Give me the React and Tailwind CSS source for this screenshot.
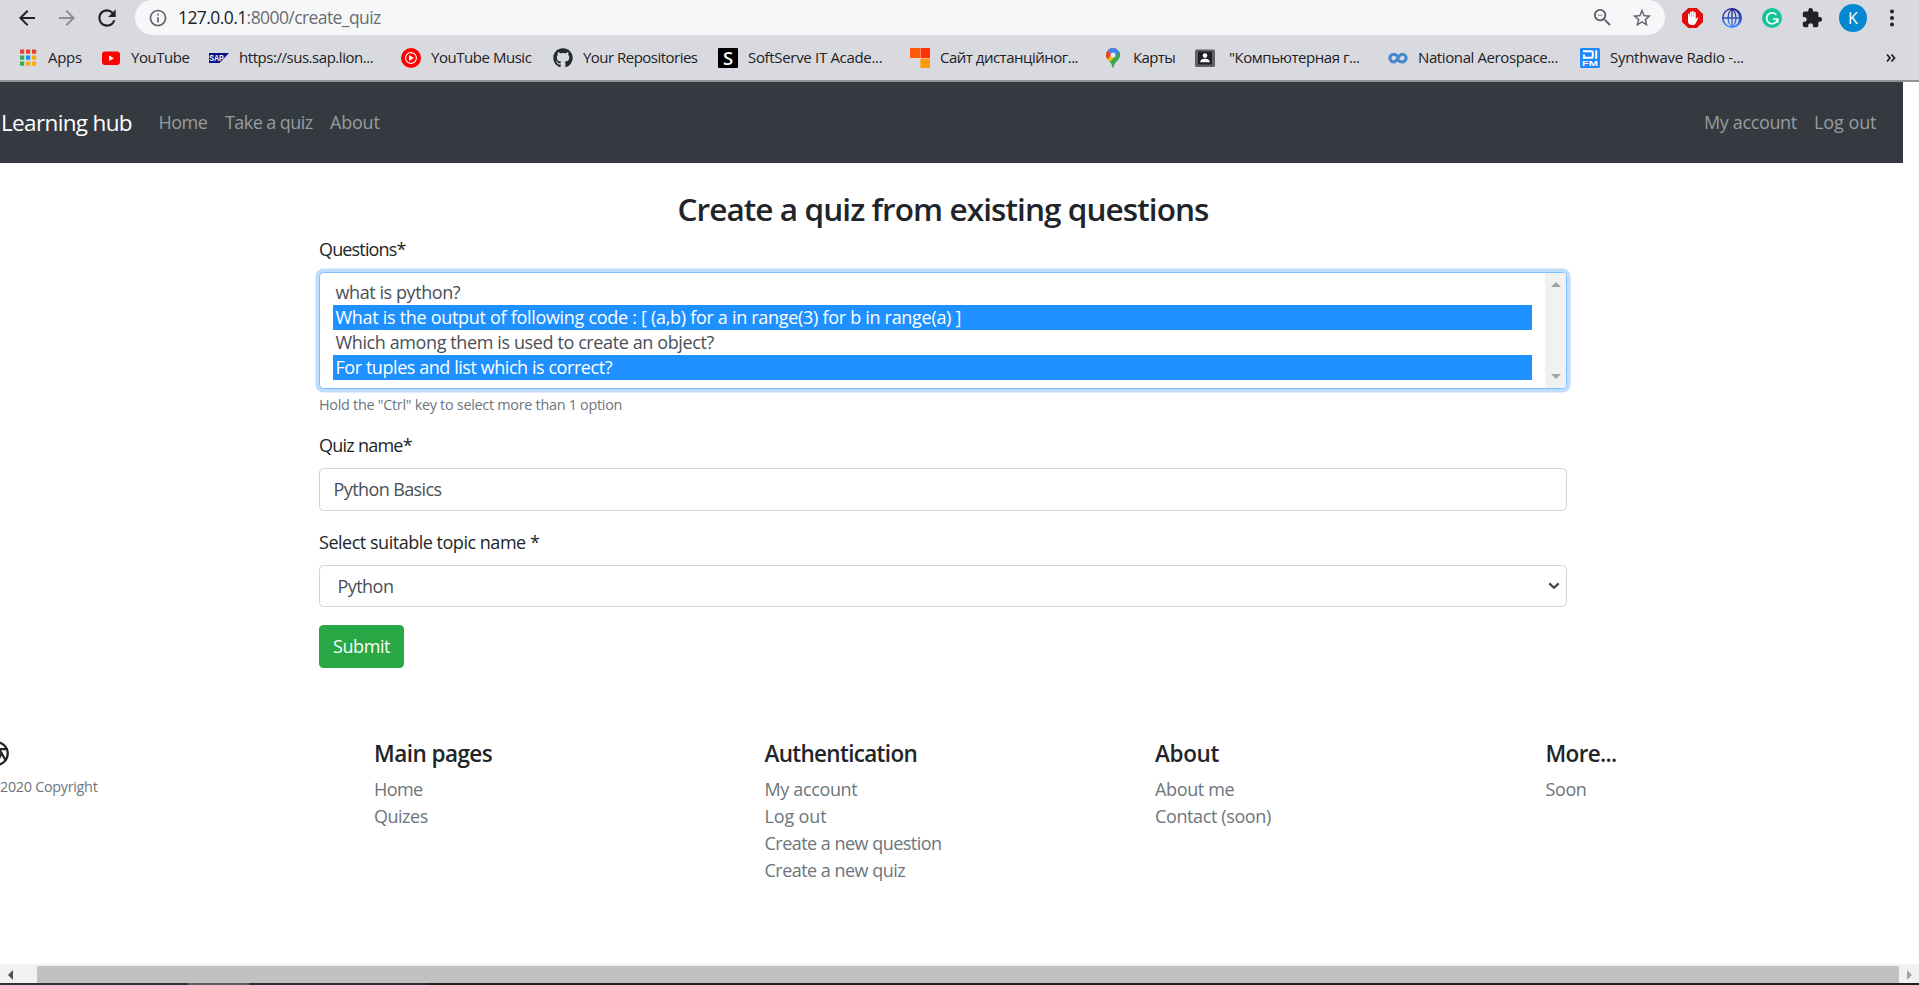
import React from "react";
import { FaGithub } from "react-icons/fa";
import { MdExtension, MdZoomOut, MdStarBorder, MdInfoOutline, MdRefresh, MdArrowBack, MdArrowForward } from "react-icons/md";
import { Aperture } from "lucide-react";

function AppsIcon() {
  const c = ["#ea4335", "#ea4335", "#ea4335", "#34a853", "#1a8cff", "#fbac08", "#34a853", "#fbac08", "#fbac08"];
  return (
    <svg width="20" height="20" viewBox="0 0 20 20">
      {c.map((f, i) => (
        <rect key={i} x={2 + (i % 3) * 6} y={1.5 + Math.floor(i / 3) * 6} width="4.2" height="4.2" fill={f} />
      ))}
    </svg>
  );
}

function YouTubeIcon() {
  return (
    <svg width="20" height="20" viewBox="0 0 20 20">
      <rect x="1" y="3.5" width="18" height="13.5" rx="3" fill="#f00" />
      <path d="M8.2 7.5v5.4l4.8-2.7z" fill="#fff" />
    </svg>
  );
}

function SapIcon() {
  return (
    <svg width="20" height="20" viewBox="0 0 20 20">
      <path d="M0 5h20l-9.5 10H0z" fill="#0a0f8a" />
      <text x="0.3" y="13" fontSize="8.4" fontWeight="800" fill="#fff" fontFamily="Liberation Sans, sans-serif" textLength="14.5" lengthAdjust="spacingAndGlyphs">SAP</text>
    </svg>
  );
}

function MusicIcon() {
  return (
    <svg width="20" height="20" viewBox="0 0 20 20">
      <circle cx="10" cy="10" r="10" fill="#f00" />
      <circle cx="10" cy="10" r="5.4" fill="none" stroke="#fff" strokeWidth="1.1" />
      <path d="M8 6.9v6.2l5-3.1z" fill="#fff" />
    </svg>
  );
}

function SoftServeIcon() {
  return (
    <svg width="20" height="20" viewBox="0 0 20 20">
      <rect width="20" height="20" rx="1" fill="#000" />
      <text x="10" y="16.6" fontSize="18.5" fontWeight="600" fill="#fff" textAnchor="middle" fontFamily="Open Sans, sans-serif">S</text>
    </svg>
  );
}

function BlocksIcon() {
  return (
    <svg width="20" height="20" viewBox="0 0 20 20">
      <rect width="10" height="10" fill="#ff5a0a" />
      <rect x="10.4" width="9.6" height="10" fill="#ff3005" />
      <rect x="10.4" y="10.6" width="9.6" height="9.4" fill="#ff9a0a" />
      <rect x="10" width="0.6" height="10" fill="#ff9a6a" />
    </svg>
  );
}

function MapsIcon() {
  return (
    <svg width="20" height="20" viewBox="0 0 20 20">
      <defs>
        <clipPath id="pin">
          <path d="M10 0a6.9 6.9 0 0 0-6.9 6.9c0 2.2 1 3.7 2.4 5.4C7.500 14.600 9 16.500 9.400 19.300c.2.9 1 .9 1.200 0 .4-2.800 1.900-4.700 3.900-7 1.400-1.700 2.400-3.200 2.400-5.400A6.900 6.900 0 0 0 10 0z" />
        </clipPath>
      </defs>
      <g clipPath="url(#pin)">
        <rect width="20" height="20" fill="#34a853" />
        <path d="M0 0h20L3 18H0z" fill="#fbbc04" />
        <path d="M0 0h14L5 11 0 9z" fill="#ea4335" />
        <path d="M4 0h16v4l-6 7-4-4-5-4z" fill="#4285f4" />
        <path d="M12 9l5-6 2 6-5 6z" fill="#34a853" />
        <path d="M3 2.500l4.600 4L3 12z" fill="#ea4335" />
      </g>
      <circle cx="10" cy="6.900" r="2.500" fill="#e6eaf0" />
    </svg>
  );
}

function PersonIcon() {
  return (
    <svg width="20" height="20" viewBox="0 0 20 20">
      <rect y="1.500" width="20" height="17.500" rx="1.500" fill="#5f6368" />
      <rect x="3" y="3.500" width="14" height="13" fill="#202124" />
      <circle cx="10" cy="7.600" r="2.300" fill="#fff" />
      <path d="M5.400 14.200v-1c0-1.700 3-2.500 4.600-2.500s4.600.8 4.600 2.500v1z" fill="#fff" />
    </svg>
  );
}

function InfinityIcon() {
  return (
    <svg width="20" height="20" viewBox="0 0 20 20">
      <path d="M9.800 8.400C8.800 7 7.400 6.200 5.800 6.200a3.900 3.900 0 0 0 0 7.800c4 0 4.400-7.800 8.400-7.800a3.900 3.900 0 0 1 0 7.800c-1.600 0-3-.8-4-2.200" fill="none" stroke="#4687cd" strokeWidth="3.100" />
    </svg>
  );
}

function DiFmIcon() {
  return (
    <svg width="20" height="20" viewBox="0 0 20 20">
      <rect width="20" height="20" rx="1.500" fill="#1e88ff" />
      <path d="M3 3.200h8.200q1.600 0 1.600 1.600v3.400q0 1.600-1.600 1.600H4V6.500M16.200 2.200v8.600" fill="none" stroke="#fff" strokeWidth="2" />
      <text x="2" y="17.800" fontSize="7.500" fontWeight="700" fill="#fff" fontFamily="Liberation Sans, sans-serif" textLength="16" lengthAdjust="spacingAndGlyphs">FM</text>
    </svg>
  );
}

const bookmarks = [
  { icon: <AppsIcon />, text: "Apps", cls: "w-[83px]", t: "tracking-[-0.3px]" },
  { icon: <YouTubeIcon />, text: "YouTube", cls: "w-[108px]", t: "tracking-[-0.45px]" },
  { icon: <SapIcon />, text: "https://sus.sap.lion...", cls: "w-[192px]", t: "tracking-[-0.46px]" },
  { icon: <MusicIcon />, text: "YouTube Music", cls: "w-[152px]", t: "tracking-[-0.46px]" },
  { icon: <FaGithub size={20} color="#24292e" />, text: "Your Repositories", cls: "w-[165px]", t: "tracking-[-0.52px]" },
  { icon: <SoftServeIcon />, text: "SoftServe IT Acade...", cls: "w-[192px]", t: "tracking-[-0.32px]" },
  { icon: <BlocksIcon />, text: "Сайт дистанційног...", cls: "w-[193px]", t: "tracking-[-0.5px]" },
  { icon: <MapsIcon />, text: "Карты", cls: "w-[92px]", t: "tracking-[-0.6px]" },
  { icon: <PersonIcon />, text: "\"Компьютерная г...", cls: "w-[193px]", t: "tracking-[-0.46px] pl-[4px]" },
  { icon: <InfinityIcon />, text: "National Aerospace...", cls: "w-[192px]", t: "tracking-[-0.39px]" },
  { icon: <DiFmIcon />, text: "Synthwave Radio -...", cls: "w-[192px]", t: "tracking-[-0.28px]" },
];

function Toolbar() {
  return (
    <div className="flex h-[35px] items-center">
      <div className="flex w-[135px] shrink-0 items-center pl-[15px]">
        <MdArrowBack size={24} color="#202124" className="mr-4 shrink-0" />
        <MdArrowForward size={24} color="#8d8f94" className="mr-[15px] shrink-0" />
        <MdRefresh size={26} color="#202124" className="shrink-0" />
      </div>
      <div className="flex h-[35px] w-[1530px] shrink-0 items-center rounded-full bg-[#f6f7f9] pl-[13px] pr-3">
        <MdInfoOutline size={20} color="#5f6368" className="shrink-0" />
        <div className="ml-[10px] flex-1 text-[17.5px] leading-[35px] tracking-[-0.58px] text-[#202124]">
          127.0.0.1<span className="text-[#6a6d72]">:8000/create_quiz</span>
        </div>
        <MdZoomOut size={23} color="#5f6368" className="mr-[17px] shrink-0" />
        <MdStarBorder size={22} color="#5f6368" className="shrink-0" />
      </div>
      <div className="flex flex-1 items-center pl-[17px]">
        <svg width="21" height="20" viewBox="0 0 21 20" className="mr-[19px] shrink-0">
          <path d="M6.300 0h8.400L21 6v8l-6.300 6H6.300L0 14V6z" fill="#e30b0b" />
          <path d="M6 10.500V6.200a.9.900 0 0 1 1.700 0V9h.3V4.200a.9.900 0 0 1 1.700 0V9h.3V3.600a.9.900 0 0 1 1.700 0V9h.3V4.500a.9.900 0 0 1 1.700 0v6.800l1.100-1.400c.7-.7 1.600-.2 1.200.7l-2.300 4.600c-.6 1.200-1.400 1.800-2.900 1.800h-.9C7.500 17 6 15.500 6 13z" fill="#fff" />
        </svg>
        <svg width="20" height="20" viewBox="0 0 20 20" className="mr-[20px] shrink-0">
          <defs>
            <linearGradient id="globe" x1="0" y1="0" x2="0" y2="1">
              <stop offset="0" stopColor="#1c1580" />
              <stop offset="1" stopColor="#3f8cff" />
            </linearGradient>
          </defs>
          <circle cx="10" cy="10" r="10" fill="url(#globe)" />
          <path d="M8.800 1.600C6.600 3.500 5.700 6 5.600 9.200H1.700C2 5.200 5 2.100 8.800 1.600zM8.800 18.400c-2.200-1.900-3.100-4.400-3.200-7.600H1.700c.3 4 3.300 7.100 7.100 7.600zM9.300 2.200v7H6.800c.1-3.200.9-5.400 2.500-7zM9.300 17.800v-7H6.800c.1 3.200.9 5.400 2.500 7zM10.700 2.200v7h2.500c-.1-3.200-.9-5.400-2.500-7zM10.700 17.800v-7h2.500c-.1 3.200-.9 5.400-2.500 7zM11.800 1.900c1.900 1.800 2.600 4.200 2.700 7.300H17c-.3-3.700-2-6.300-5.200-7.300zM11.800 18.100c1.900-1.800 2.600-4.200 2.700-7.300H17c-.3 3.700-2 6.300-5.200 7.300z" fill="#d9dadf" />
        </svg>
        <svg width="20" height="20" viewBox="0 0 20 20" className="mr-[19px] shrink-0">
          <circle cx="10" cy="10" r="10" fill="#15c39a" />
          <path d="M14.400 6.800A5.500 5.500 0 1 0 15.200 12.300M11 11h4.700v3.800" fill="none" stroke="#fff" strokeWidth="1.700" />
        </svg>
        <MdExtension size={22} color="#202124" className="mr-[16px] shrink-0" />
        <div className="flex h-7 w-7 shrink-0 items-center justify-center rounded-full bg-[#0488d1] text-[16px] leading-7 text-white">K</div>
        <svg width="6" height="18" viewBox="0 0 6 18" className="ml-[22px] shrink-0" fill="#202124">
          <circle cx="3" cy="2.500" r="2" />
          <circle cx="3" cy="9" r="2" />
          <circle cx="3" cy="15.500" r="2" />
        </svg>
      </div>
    </div>
  );
}

function Browser() {
  return (
    <header className="h-[82px] shrink-0 border-b-2 border-[#919399] bg-[#d9dadf]">
      <Toolbar />
      <div className="flex h-[45px] items-center pl-[18px]">
        {bookmarks.map((b) => (
          <div key={b.text} className={"flex shrink-0 items-center gap-[10px] whitespace-nowrap " + b.cls}>
            <span className="flex w-5 shrink-0">{b.icon}</span>
            <span className={"-mt-[2px] text-[15px] leading-[22px] text-[#202124] " + b.t}>{b.text}</span>
          </div>
        ))}
        <svg width="13" height="10" viewBox="0 0 13 10" className="ml-[112px]" fill="none" stroke="#202124" strokeWidth="1.800">
          <path d="M5.500 1.500l3 3.500-3 3.500M1 1.500L4 5 1 8.500" transform="translate(2 0)" />
        </svg>
      </div>
    </header>
  );
}

function Navbar() {
  return (
    <nav className="flex h-[81px] w-[1903px] shrink-0 items-center whitespace-nowrap bg-[#343a40] pl-[1px] text-[18px] text-[#999c9f]">
      <span className="w-[157.500px] text-[22.500px] tracking-[-0.65px] text-white">Learning hub</span>
      <span className="w-[66.500px] tracking-[-0.52px]">Home</span>
      <span className="w-[105px] tracking-[-0.58px]">Take a quiz</span>
      <span className="tracking-[-0.2px]">About</span>
      <span className="ml-auto w-[110px] tracking-[-0.36px]">My account</span>
      <span className="w-[89px] tracking-[-0.07px]">Log out</span>
    </nav>
  );
}

const options = [
  ["what is python?", false, "tracking-[-0.42px]"],
  ["What is the output of following code : [ (a,b) for a in range(3) for b in range(a) ]", true, "tracking-[-0.3px]"],
  ["Which among them is used to create an object?", false, "tracking-[-0.39px]"],
  ["For tuples and list which is correct?", true, "tracking-[-0.44px]"],
];

function QuizForm() {
  return (
    <main className="ml-[319px] flex w-[1248px] flex-col whitespace-nowrap pt-[27px] text-[18px] leading-[27px] text-[#212529]">
      <h2 className="text-center text-[31.500px] font-semibold leading-[38px] tracking-[-0.91px]">Create a quiz from existing questions</h2>
      <label className="mt-[8px] tracking-[-0.85px]">Questions*</label>
      <div className="mt-[9px] flex h-[117px] rounded-[4.500px] border border-[#80bdff] bg-white shadow-[0_0_0_3.600px_rgba(0,123,255,0.25)]">
        <div className="flex-1 pl-[13px] pr-[13px] pt-[7px]">
          {options.map(([text, on, t]) => (
            <div key={text} className={"h-[25px] pl-[2.500px] leading-[25px] " + t + (on ? " bg-[#1e90ff] text-white" : " text-[#495057]")}>{text}</div>
          ))}
        </div>
        <div className="flex w-[21px] flex-col items-center justify-between rounded-r-[3px] bg-[#f1f1f1] pb-[9px] pt-[9px]">
          <svg width="10" height="5" viewBox="0 0 10 5" fill="#a3a3a3"><path d="M5 0l5 5H0z" /></svg>
          <svg width="10" height="5" viewBox="0 0 10 5" fill="#a3a3a3"><path d="M5 5l5-5H0z" /></svg>
        </div>
      </div>
      <small className="mt-[5px] text-[14.400px] leading-[22px] tracking-[-0.28px] text-[#6c757d]">Hold the "Ctrl" key to select more than 1 option</small>
      <label className="mt-[16px] tracking-[-0.76px]">Quiz name*</label>
      <div className="mt-[9px] h-[43px] rounded-[4.500px] border border-[#ced4da] pl-[13.500px] leading-[41px] tracking-[-0.6px] text-[#495057]">Python Basics</div>
      <label className="mt-[18px] tracking-[-0.48px]">Select suitable topic name *</label>
      <div className="mt-[9px] flex h-[42px] items-center justify-between rounded-[4.500px] border border-[#ced4da] pl-[17.500px] pr-[6px] tracking-[-0.55px] text-[#495057]">
        Python
        <svg width="12" height="8" viewBox="0 0 12 8" fill="none" stroke="#3f454c" strokeWidth="2.200"><path d="M1.300 1.400L6 5.800l4.700-4.400" /></svg>
      </div>
      <button className="mt-[18px] h-[43px] w-[85px] rounded-[4.500px] bg-[#28a745] text-center leading-[43px] tracking-[-0.42px] text-white">Submit</button>
    </main>
  );
}

const columns = [
  { title: "Main pages", w: "w-[390.500px]", t: "tracking-[-0.55px]", links: [["Home", "tracking-[-0.55px]"], ["Quizes", "tracking-[-0.5px]"]] },
  { title: "Authentication", w: "w-[390.500px]", t: "tracking-[-0.69px]", links: [["My account", "tracking-[-0.36px]"], ["Log out", "tracking-[-0.15px]"], ["Create a new question", "tracking-[-0.52px]"], ["Create a new quiz", "tracking-[-0.52px]"]] },
  { title: "About", w: "w-[390.500px]", t: "tracking-[-0.36px]", links: [["About me", "tracking-[-0.35px]"], ["Contact (soon)", "tracking-[-0.38px]"]] },
  { title: "More...", w: "w-[300px]", t: "tracking-[-0.66px]", links: [["Soon", "tracking-[-0.4px]"]] },
];

function Footer() {
  return (
    <footer className="mt-[72px] flex whitespace-nowrap">
      <div className="w-[374px] shrink-0">
        <Aperture size={27} strokeWidth={2} color="#212529" className="-ml-[17px]" />
        <div className="mt-[9px] text-[14.400px] leading-[22px] tracking-[-0.3px] text-[#6c757d]">2020 Copyright</div>
      </div>
      {columns.map((c) => (
        <div key={c.title} className={"shrink-0 " + c.w}>
          <h5 className={"text-[22.500px] font-semibold leading-[27px] text-[#212529] " + c.t}>{c.title}</h5>
          <ul className="mt-[9px] text-[18px] leading-[27px] text-[#6c757d]">
            {c.links.map(([l, t]) => <li key={l} className={t}>{l}</li>)}
          </ul>
        </div>
      ))}
    </footer>
  );
}

function Scrollbar() {
  return (
    <div className="mt-auto shrink-0">
      <div className="flex h-[19px] items-center bg-[#f1f1f1] pt-[2px]">
        <div className="flex w-[37px] pl-2"><svg width="6" height="10" viewBox="0 0 6 10" fill="#505050"><path d="M0 5l5-5v10z" /></svg></div>
        <div className="h-[17px] w-[1862px] bg-[#c1c1c1]" />
        <div className="flex flex-1 pl-2"><svg width="6" height="10" viewBox="0 0 6 10" fill="#a3a3a3"><path d="M5 5L0 0v10z" /></svg></div>
      </div>
      <div className="flex h-[2px] bg-[#1f2023]">
        <div className="w-[188px] bg-[#2b323b]" />
        <div className="w-[61px] bg-[#5b5c61]" />
        <div className="w-[180px] bg-[#2b2e34]" />
      </div>
    </div>
  );
}

export default function App() {
  return (
    <div className="flex h-[985px] w-[1919px] flex-col overflow-hidden bg-white font-['Open_Sans','Noto_Sans',sans-serif]">
      <Browser />
      <Navbar />
      <QuizForm />
      <Footer />
      <Scrollbar />
    </div>
  );
}
